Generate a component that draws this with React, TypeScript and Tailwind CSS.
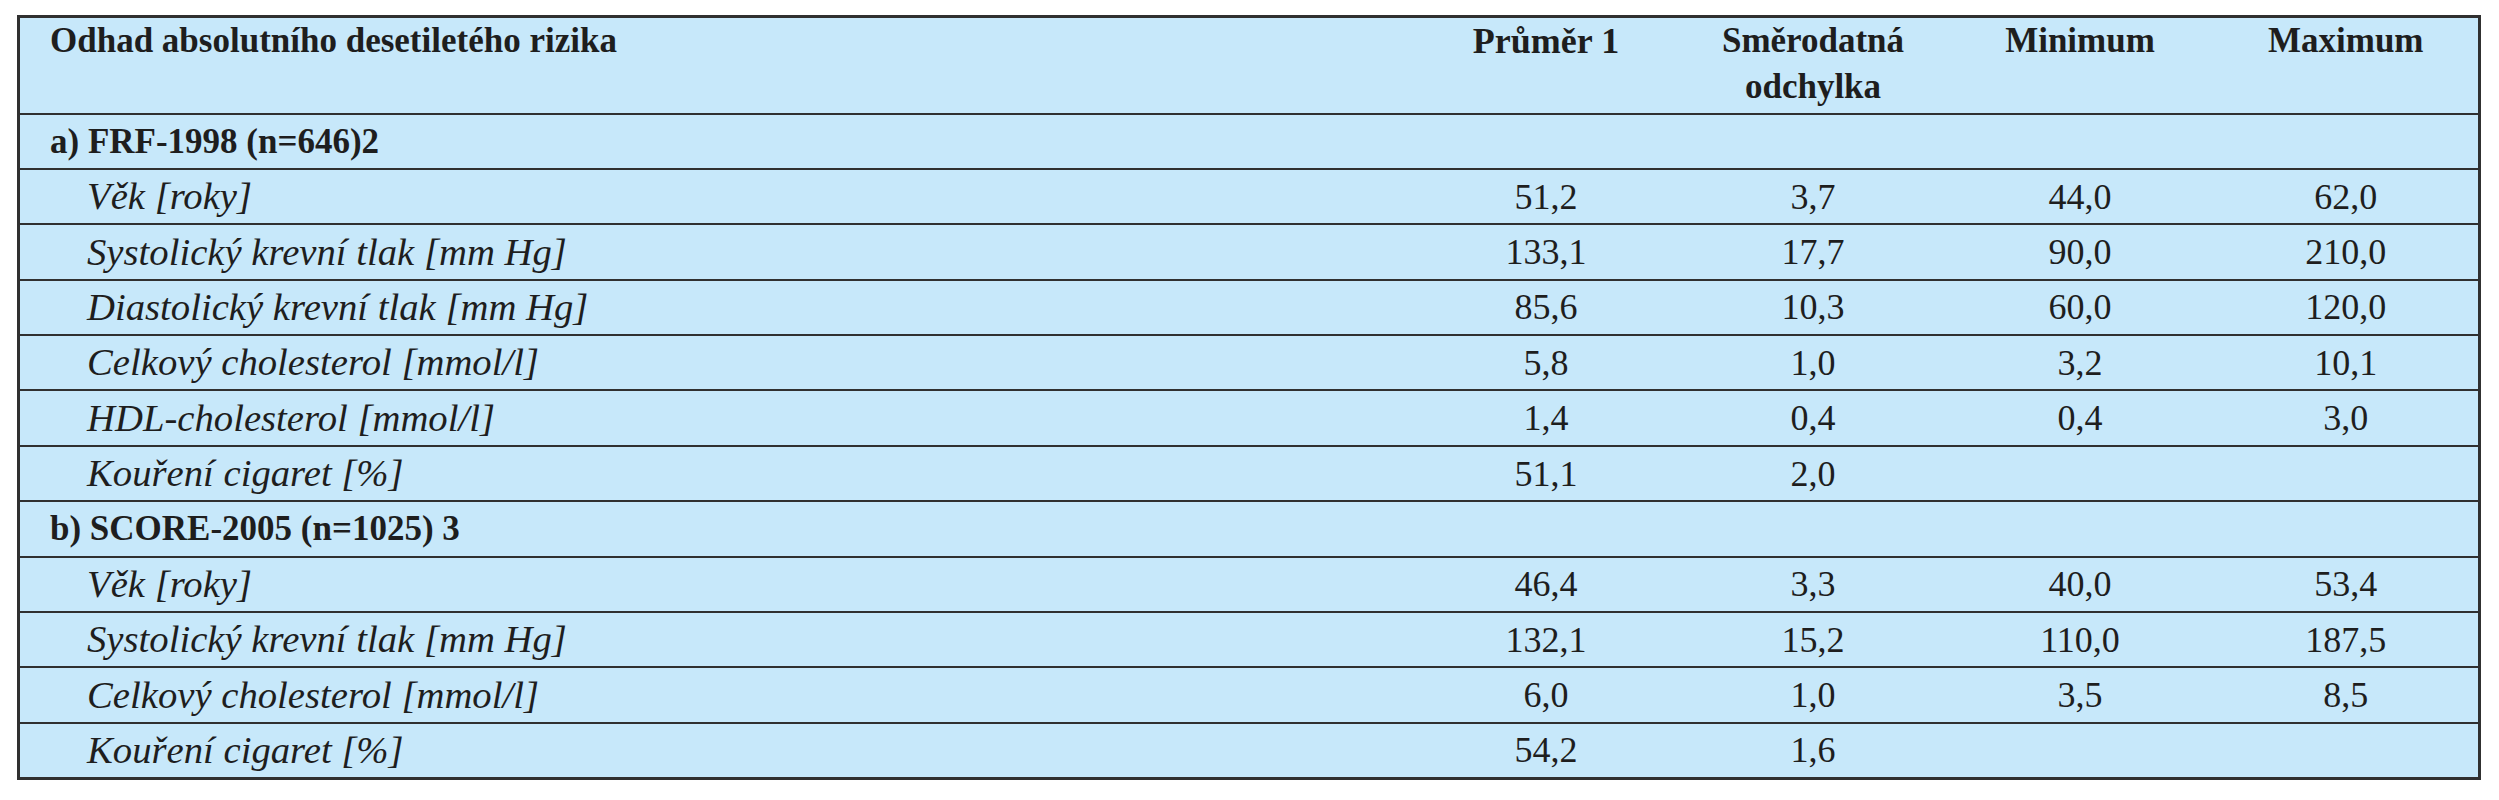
import React from "react";

type Row =
  | { kind: "section"; label: string }
  | { kind: "data"; label: string; vals: string[] };

const rows: Row[] = [
  { kind: "section", label: "a) FRF-1998 (n=646)2" },
  { kind: "data", label: "Věk [roky]", vals: ["51,2", "3,7", "44,0", "62,0"] },
  { kind: "data", label: "Systolický krevní tlak [mm Hg]", vals: ["133,1", "17,7", "90,0", "210,0"] },
  { kind: "data", label: "Diastolický krevní tlak [mm Hg]", vals: ["85,6", "10,3", "60,0", "120,0"] },
  { kind: "data", label: "Celkový cholesterol [mmol/l]", vals: ["5,8", "1,0", "3,2", "10,1"] },
  { kind: "data", label: "HDL-cholesterol [mmol/l]", vals: ["1,4", "0,4", "0,4", "3,0"] },
  { kind: "data", label: "Kouření cigaret [%]", vals: ["51,1", "2,0", "", ""] },
  { kind: "section", label: "b) SCORE-2005 (n=1025) 3" },
  { kind: "data", label: "Věk [roky]", vals: ["46,4", "3,3", "40,0", "53,4"] },
  { kind: "data", label: "Systolický krevní tlak [mm Hg]", vals: ["132,1", "15,2", "110,0", "187,5"] },
  { kind: "data", label: "Celkový cholesterol [mmol/l]", vals: ["6,0", "1,0", "3,5", "8,5"] },
  { kind: "data", label: "Kouření cigaret [%]", vals: ["54,2", "1,6", "", ""] },
];

export default function App() {
  return (
    <div className="w-[2499px] h-[800px] bg-white pl-[17px] pt-[15px] font-['Liberation_Serif','Times_New_Roman',serif] text-[#1e1e1e]">
      <table className="w-[2461px] border-collapse border-[3px] border-[#303030] bg-[#c7e8fa] table-fixed font-['Liberation_Serif','Times_New_Roman',serif]">
        <colgroup>
          <col className="w-[1394px]" />
          <col className="w-[267px]" />
          <col className="w-[267px]" />
          <col className="w-[267px]" />
          <col className="w-[266px]" />
        </colgroup>
        <thead>
          <tr className="h-[97px] border-b-[2px] border-[#303030]">
            <th className="text-left align-top pl-[30px] pt-0 text-[35px] leading-[46px] font-bold">
              Odhad absolutního desetiletého rizika
            </th>
            <th className="text-center align-top pt-0 text-[36px] leading-[46px] font-bold">Průměr 1</th>
            <th className="text-center align-top pt-0 text-[35px] leading-[46px] font-bold">
              Směrodatná
              <br />
              odchylka
            </th>
            <th className="text-center align-top pt-0 text-[35px] leading-[46px] font-bold">Minimum</th>
            <th className="text-center align-top pt-0 text-[35px] leading-[46px] font-bold">Maximum</th>
          </tr>
        </thead>
        <tbody>
          {rows.map((r, i) =>
            r.kind === "section" ? (
              <tr key={i} className="h-[55.4px] border-b-[2px] border-[#303030]">
                <td colSpan={5} className="pl-[30px] align-middle text-[35px] font-bold leading-none">
                  {r.label}
                </td>
              </tr>
            ) : (
              <tr key={i} className="h-[55.4px] border-b-[2px] border-[#303030]">
                <td className="pl-[67px] align-middle text-[38.7px] italic leading-none">{r.label}</td>
                {r.vals.map((v, j) => (
                  <td key={j} className="text-center align-middle text-[36px] leading-none">
                    {v}
                  </td>
                ))}
              </tr>
            )
          )}
        </tbody>
      </table>
    </div>
  );
}
